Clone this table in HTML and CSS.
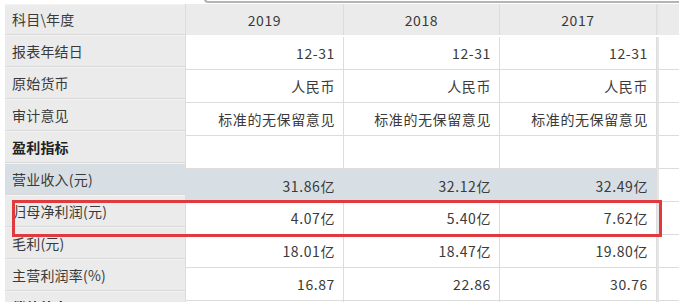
FILE: index.html
```html
<!DOCTYPE html>
<html>
<head>
  <meta charset="UTF-8">
  <title>主要指标</title>
  <link rel="stylesheet" href="styles.css">
</head>
<body>

  <div class="page">
    <div class="tabline"><div class="tab"></div></div>

    <div class="sheet">
      <div class="labels">
        <div class="lcell head">科目\年度</div>
        <div class="lcell">报表年结日</div>
        <div class="lcell">原始货币</div>
        <div class="lcell">审计意见</div>
        <div class="lcell bold">盈利指标</div>
        <div class="lcell hl">营业收入(元)</div>
        <div class="lcell">归母净利润(元)</div>
        <div class="lcell">毛利(元)</div>
        <div class="lcell">主营利润率(%)</div>
        <div class="lcell bold">偿债能力</div>
      </div>

      <div class="data">
        <div class="cell head">2019</div>
        <div class="cell head">2018</div>
        <div class="cell head">2017</div>
        <div class="cell head tail"></div>

        <div class="cell">12-31</div>
        <div class="cell">12-31</div>
        <div class="cell">12-31</div>
        <div class="cell tail"></div>

        <div class="cell">人民币</div>
        <div class="cell">人民币</div>
        <div class="cell">人民币</div>
        <div class="cell tail"></div>

        <div class="cell">标准的无保留意见</div>
        <div class="cell">标准的无保留意见</div>
        <div class="cell">标准的无保留意见</div>
        <div class="cell tail"></div>

        <div class="cell"></div>
        <div class="cell"></div>
        <div class="cell"></div>
        <div class="cell tail"></div>

        <div class="cell hl">31.86亿</div>
        <div class="cell hl">32.12亿</div>
        <div class="cell hl">32.49亿</div>
        <div class="cell tail"></div>

        <div class="cell">4.07亿</div>
        <div class="cell">5.40亿</div>
        <div class="cell">7.62亿</div>
        <div class="cell tail"></div>

        <div class="cell">18.01亿</div>
        <div class="cell">18.47亿</div>
        <div class="cell">19.80亿</div>
        <div class="cell tail"></div>

        <div class="cell">16.87</div>
        <div class="cell">22.86</div>
        <div class="cell">30.76</div>
        <div class="cell tail"></div>

        <div class="cell"></div>
        <div class="cell"></div>
        <div class="cell"></div>
        <div class="cell tail"></div>
      </div>
    </div>

    <!-- red highlight drawn over the row -->
    <div class="mark"></div>
  </div>

</body>
</html>
```

FILE: styles.css
```css
body {
  margin: 0;
  padding: 0;
  background-color: #fff;
  font-family: "Noto Sans CJK SC", "Liberation Sans", sans-serif;
  font-size: 14px;
  color: #3a3a3a;
}
*, *:before, *:after {
  box-sizing: border-box;
}

.page {
  position: relative;
  width: 679px;
  height: 302px;
  overflow: hidden;
}

.tabline {
  height: 5px;
  padding-left: 204px;
}
.tab {
  height: 4px;
  border-left: 2px solid #b4b4b4;
  border-bottom: 2px solid #b4b4b4;
  border-bottom-left-radius: 6px;
  margin-top: -1px;
}

.sheet {
  display: flex;
  padding-left: 5px;
}

.labels {
  width: 181px;
  flex: none;
  background-color: #ebebeb;
  border-right: 1px solid #dcdcdc;
}
.lcell {
  height: 32px;
  padding-left: 7px;
  display: flex;
  align-items: center;
  border-bottom: 1px solid #d9d9d9;
  box-shadow: inset 0 1px 0 #f4f4f4;
  white-space: nowrap;
  letter-spacing: 0.2px;
}
.lcell.head {
  height: 31px;
}
.lcell.bold {
  font-weight: bold;
  color: #222;
}
.lcell.hl {
  background-color: #d7dee4;
}

.data {
  flex: 1;
  display: grid;
  grid-template-columns: 158px 156px 157px 1fr;
  grid-auto-rows: 33px;
}
.data .cell {
  display: flex;
  align-items: center;
  justify-content: flex-end;
  padding-right: 8px;
  border-right: 1px solid #dcdcdc;
  border-bottom: 1px solid #dcdcdc;
  white-space: nowrap;
  letter-spacing: 0.6px;
}
.data .cell.head {
  height: 31px;
  justify-content: center;
  padding-right: 0;
  background-color: #ebebeb;
  border-bottom: none;
}
.data .cell.hl {
  background-color: #d7dee4;
  border-bottom: none;
}
.data .cell.tail {
  border-right: none;
  border-left: 2px solid #e6e6e6;
}

.mark {
  position: absolute;
  left: 12px;
  top: 200px;
  width: 650px;
  height: 37px;
  border: 3px solid #e0393e;
  pointer-events: none;
}
```
